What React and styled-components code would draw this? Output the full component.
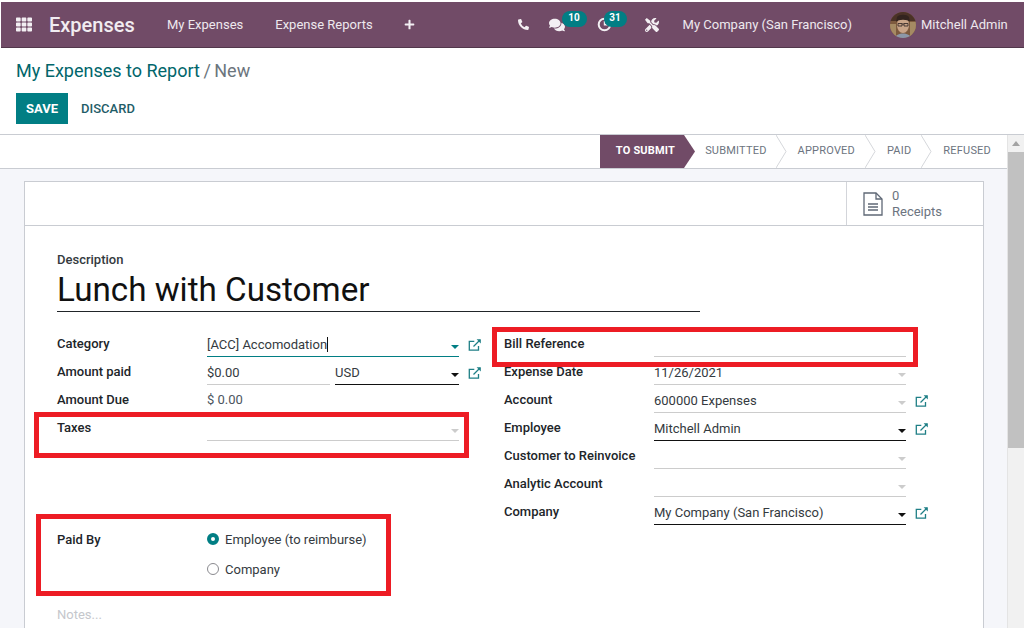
import React from "react";
import styled, { createGlobalStyle } from "styled-components";
import { FaPhoneAlt, FaComments, FaPlus, FaTools, FaTh } from "react-icons/fa";

const Global = createGlobalStyle`
  html, body { margin: 0; padding: 0; height: 100%; overflow: hidden; background: #fff; }
  body { font-family: Roboto, "Noto Sans", sans-serif; font-size: 13px; color: #212529; }
  #root { height: 628px; }
`;

const Page = styled.div`
  position: relative;
  width: 1024px;
  height: 628px;
  overflow: hidden;
  display: flex;
  flex-direction: column;
`;

const Navbar = styled.div`
  height: 45px;
  margin: 2px 0 0 1px;
  background: #714b67;
  border-bottom: 1px solid #52374b;
  display: flex;
  align-items: center;
  color: #eee8ee;
  flex-shrink: 0;
`;

const Apps = styled.div`
  width: 16px;
  margin-left: 15px;
  display: flex;
  color: #f3eff3;
  font-size: 17px;
`;

const Brand = styled.div`
  margin-left: 17px;
  font-size: 20px;
  font-weight: 500;
  color: #f1ecf1;
  width: 118px;
`;

const NavLink = styled.div`
  margin-right: ${(p) => p.$right ?? 32}px;
  margin-left: ${(p) => p.$left || 0}px;
  font-size: 13px;
`;

const NavIcon = styled.div`
  position: relative;
  display: flex;
  align-items: center;
  justify-content: center;
  font-size: ${(p) => p.$size || 13}px;
  margin-left: ${(p) => p.$left || 0}px;
  color: #f3eff3;
`;

const Badge = styled.span`
  position: absolute;
  top: -6px;
  left: ${(p) => p.$left}px;
  width: ${(p) => p.$width}px;
  height: 16px;
  border-radius: 8px;
  background: #017e84;
  color: #fff;
  font-size: 10px;
  font-weight: 700;
  line-height: 14px;
  text-align: center;
`;

const Avatar = styled.svg`
  width: 26px;
  height: 26px;
  margin-left: 38px;
  border-radius: 50%;
`;

const ControlPanel = styled.div`
  height: 87px;
  box-sizing: border-box;
  padding: 12px 16px 0;
  border-bottom: 1px solid #c9ccd2;
  flex-shrink: 0;
`;

const Crumbs = styled.div`
  font-size: 18px;
  line-height: 21px;
  color: #01666b;
  span {
    color: #6c757d;
    margin-left: -1px;
    word-spacing: -1px;
  }
`;

const Actions = styled.div`
  display: flex;
  align-items: center;
  margin-top: 12px;
`;

const Button = styled.div`
  height: 31px;
  line-height: 31px;
  padding: 0 ${(p) => (p.$primary ? 10 : 13)}px;
  background: ${(p) => (p.$primary ? "#017e84" : "transparent")};
  color: ${(p) => (p.$primary ? "#fff" : "#1f5d68")};
  font-size: 13px;
  font-weight: ${(p) => (p.$primary ? 700 : 500)};
`;

const Body = styled.div`
  flex: 1;
  display: flex;
  min-height: 0;
`;

const Main = styled.div`
  flex: 1;
  min-width: 0;
  display: flex;
  flex-direction: column;
`;

const StatusBar = styled.div`
  height: 34px;
  box-sizing: border-box;
  border-bottom: 1px solid #c9ccd2;
  display: flex;
  justify-content: flex-end;
  flex-shrink: 0;
`;

const Stage = styled.div`
  position: relative;
  height: 33px;
  box-sizing: border-box;
  padding: 0 ${(p) => p.$right}px 0 ${(p) => p.$left}px;
  line-height: 32px;
  font-size: 11px;
  letter-spacing: 0.2px;
  font-weight: ${(p) => (p.$current ? 700 : 400)};
  color: ${(p) => (p.$current ? "#fff" : "#6c7480")};
  background: ${(p) => (p.$current ? "#714b67" : "transparent")};
`;

const Arrow = styled.svg`
  position: absolute;
  top: 0;
  left: 100%;
  width: 11px;
  height: 33px;
`;

const Sheet = styled.div`
  flex: 1;
  background: #f5f6fa;
  padding: 12px 23px 0 24px;
  min-height: 0;
`;

const Card = styled.div`
  background: #fff;
  border: 1px solid #c9ccd2;
  border-bottom: 0;
  height: 100%;
  box-sizing: border-box;
`;

const ButtonBox = styled.div`
  height: 44px;
  box-sizing: border-box;
  border-bottom: 1px solid #c9ccd2;
  display: flex;
  justify-content: flex-end;
`;

const StatButton = styled.div`
  width: 137px;
  box-sizing: border-box;
  border-left: 1px solid #d3d5da;
  display: flex;
  align-items: center;
  padding-left: 16px;
  gap: 9px;
  color: #6c7480;
  font-size: 13px;
  line-height: 15.5px;
`;

const FormBody = styled.div`
  padding: 26px 32px 0;
`;

const SmallLabel = styled.div`
  font-weight: 500;
  font-size: 13px;
  line-height: 16px;
  color: #343a40;
`;

const Title = styled.div`
  width: 643px;
  height: 44px;
  box-sizing: border-box;
  margin-bottom: 17px;
  border-bottom: 1px solid #212529;
  font-size: 33.2px;
  line-height: 44px;
  color: #111;
`;

const Columns = styled.div`
  display: flex;
`;

const Column = styled.div`
  width: 447px;
  display: flex;
  flex-direction: column;
`;

const Row = styled.div`
  display: flex;
  height: ${(p) => p.$h || 28}px;
  align-items: flex-start;
`;

const Label = styled.div`
  width: 150px;
  flex-shrink: 0;
  font-weight: 500;
  font-size: 13px;
  line-height: 28px;
  margin-top: 1px;
  color: #212529;
`;

const Field = styled.div`
  position: relative;
  width: ${(p) => p.$width || 252}px;
  height: 28px;
  box-sizing: border-box;
  border-bottom: 1px solid ${(p) => p.$line || "#ccc"};
  line-height: 32px;
  font-size: 13px;
  color: #343a40;
  flex-shrink: 0;
  margin-right: ${(p) => p.$gap || 0}px;
`;

const PlainValue = styled.div`
  line-height: 30px;
  color: #4c5560;
  font-size: 13px;
`;

const Caret = styled.span`
  position: absolute;
  right: 0;
  top: 16px;
  border-left: 4px solid transparent;
  border-right: 4px solid transparent;
  border-top: 4px solid ${(p) => p.$color || "#ccc"};
`;

const Cursor = styled.span`
  display: inline-block;
  width: 1px;
  height: 15px;
  background: #111;
  vertical-align: -3px;
`;

const LinkIcon = styled.svg`
  width: 14px;
  height: 14px;
  margin: 9px 0 0 9px;
`;

const RadioGroup = styled.div`
  margin-top: -1px;
`;

const RadioRow = styled.div`
  display: flex;
  align-items: center;
  height: 30px;
  gap: 6px;
  color: #343a40;
  font-size: 13px;
`;

const Radio = styled.span`
  width: 12px;
  height: 12px;
  box-sizing: border-box;
  border-radius: 50%;
  background: ${(p) => (p.$on ? "#fff" : "transparent")};
  border: ${(p) => (p.$on ? "4px solid #017e84" : "1px solid #8a8a8f")};
`;

const Spacer = styled.div`
  height: ${(p) => p.$h}px;
`;

const Notes = styled.div`
  margin-top: 22px;
  color: #c5c7cc;
  font-size: 13px;
`;

const Highlight = styled.div`
  position: absolute;
  left: ${(p) => p.$x}px;
  top: ${(p) => p.$y}px;
  width: ${(p) => p.$w}px;
  height: ${(p) => p.$h}px;
  box-sizing: border-box;
  border: 5px solid #ed1c24;
  pointer-events: none;
`;

const Scrollbar = styled.div`
  width: 17px;
  flex-shrink: 0;
  background: #f1f1f1;
  border-left: 1px solid #e4e4e4;
  box-sizing: border-box;
  display: flex;
  flex-direction: column;
  align-items: center;
`;

const ScrollUp = styled.div`
  height: 17px;
  display: flex;
  align-items: center;
  span {
    border-left: 4px solid transparent;
    border-right: 4px solid transparent;
    border-bottom: 5px solid #a3a3a3;
  }
`;

const ScrollThumb = styled.div`
  width: 100%;
  height: 296px;
  background: #c1c1c1;
`;

const External = () => (
  <LinkIcon viewBox="0 0 14 14" fill="none" stroke="#1f7f86" strokeWidth="1.3">
    <path d="M10.5 8v4.2H1.3V3.4h5" />
    <path d="M5.5 8.5 12 2" />
    <path d="M8.6 1.2h4.2v4.2z" fill="#1f7f86" stroke="none" />
  </LinkIcon>
);

const stages = [
  { name: "SUBMITTED", left: 21, right: 9, chevron: true },
  { name: "APPROVED", left: 22, right: 10, chevron: true },
  { name: "PAID", left: 22, right: 10, chevron: true },
  { name: "REFUSED", left: 22, right: 16 },
];

const rightRows = [
  { label: "Bill Reference" },
  { label: "Expense Date", value: "11/26/2021", caret: true },
  { label: "Account", value: "600000 Expenses", caret: true, link: true },
  { label: "Employee", value: "Mitchell Admin", caret: true, link: true, strong: true },
  { label: "Customer to Reinvoice", caret: true },
  { label: "Analytic Account", caret: true },
  { label: "Company", value: "My Company (San Francisco)", caret: true, link: true, strong: true },
];

export default function App() {
  return (
    <Page>
      <Global />
      <Navbar>
        <Apps><FaTh /></Apps>
        <Brand>Expenses</Brand>
        <NavLink>My Expenses</NavLink>
        <NavLink $right={31}>Expense Reports</NavLink>
        <NavIcon $size={11}><FaPlus /></NavIcon>
        <NavIcon $size={11} $left={103}><FaPhoneAlt /></NavIcon>
        <NavIcon $size={16} $left={20}>
          <FaComments />
          <Badge $left={13} $width={25}>10</Badge>
        </NavIcon>
        <NavIcon $size={15} $left={32}>
          <svg width="15" height="15" viewBox="0 0 15 15" fill="none" stroke="#f3eff3" strokeWidth="2">
            <circle cx="7.5" cy="7.5" r="5.8" />
            <path d="M7.5 4v3.8h3" strokeWidth="1.4" />
          </svg>
          <Badge $left={7} $width={23}>31</Badge>
        </NavIcon>
        <NavIcon $size={14} $left={33}><FaTools /></NavIcon>
        <NavLink $left={24} $right={0}>My Company (San Francisco)</NavLink>
        <Avatar viewBox="0 0 26 26">
          <rect width="26" height="26" fill="#7d5a3e" />
          <path d="M0 0h26v9H0z" fill="#4a3226" />
          <path d="M0 12h6v14H0zM20 10h6v16h-6z" fill="#a58a63" />
          <ellipse cx="13" cy="13" rx="6" ry="8" fill="#c9a488" />
          <path d="M7 5c2-3 10-3 12 0l1 5c-2-3-12-3-14 0z" fill="#33241f" />
          <path d="M8 11.5h4v2.5H8zM14 11.5h4v2.5h-4zM12 12h2" fill="none" stroke="#3b2e2a" strokeWidth="0.9" />
          <path d="M5 26c1-6 15-6 16 0z" fill="#8c97a8" />
        </Avatar>
        <NavLink $left={5} $right={0}>Mitchell Admin</NavLink>
      </Navbar>

      <ControlPanel>
        <Crumbs>My Expenses to Report <span>/ New</span></Crumbs>
        <Actions>
          <Button $primary>SAVE</Button>
          <Button>DISCARD</Button>
        </Actions>
      </ControlPanel>

      <Body>
        <Main>
          <StatusBar>
            <Stage $current $left={16} $right={9}>
              TO SUBMIT
              <Arrow viewBox="0 0 11 33"><path d="M0 0 11 16.5 0 33z" fill="#714b67" /></Arrow>
            </Stage>
            {stages.map((s) => (
              <Stage key={s.name} $left={s.left} $right={s.right}>
                {s.name}
                {s.chevron && (
                  <Arrow viewBox="0 0 11 33">
                    <path d="M0 0 10 16.5 0 33" fill="none" stroke="#d5d7db" />
                  </Arrow>
                )}
              </Stage>
            ))}
          </StatusBar>
          <Sheet>
            <Card>
              <ButtonBox>
                <StatButton>
                  <svg width="20" height="24" viewBox="0 0 20 24" fill="none" stroke="#5f6876" strokeWidth="1.3">
                    <path d="M1 1h12l6 6v16H1z" />
                    <path d="M13 1v6h6" />
                    <path d="M5 12h10M5 15h10M5 18h10" />
                  </svg>
                  <div>0<br />Receipts</div>
                </StatButton>
              </ButtonBox>
              <FormBody>
                <SmallLabel>Description</SmallLabel>
                <Title>Lunch with Customer</Title>
                <Columns>
                  <Column>
                    <Row>
                      <Label>Category</Label>
                      <Field $line="#017e84">
                        [ACC] Accomodation<Cursor />
                        <Caret $color="#017e84" />
                      </Field>
                      <External />
                    </Row>
                    <Row>
                      <Label>Amount paid</Label>
                      <Field $width={123} $gap={5}>$0.00</Field>
                      <Field $width={124} $line="#111">
                        USD
                        <Caret $color="#111" />
                      </Field>
                      <External />
                    </Row>
                    <Row>
                      <Label>Amount Due</Label>
                      <PlainValue>$ 0.00</PlainValue>
                    </Row>
                    <Row>
                      <Label>Taxes</Label>
                      <Field><Caret /></Field>
                    </Row>
                    <Spacer $h={84} />
                    <Row $h={60}>
                      <Label>Paid By</Label>
                      <RadioGroup>
                        <RadioRow><Radio $on />Employee (to reimburse)</RadioRow>
                        <RadioRow><Radio />Company</RadioRow>
                      </RadioGroup>
                    </Row>
                    <Notes>Notes...</Notes>
                  </Column>
                  <Column>
                    {rightRows.map((r) => (
                      <Row key={r.label}>
                        <Label>{r.label}</Label>
                        <Field $line={r.strong ? "#111" : "#ccc"}>
                          {r.value}
                          {r.caret && <Caret $color={r.strong ? "#111" : "#ccc"} />}
                        </Field>
                        {r.link && <External />}
                      </Row>
                    ))}
                  </Column>
                </Columns>
              </FormBody>
            </Card>
          </Sheet>
        </Main>
        <Scrollbar>
          <ScrollUp><span /></ScrollUp>
          <ScrollThumb />
        </Scrollbar>
      </Body>

      <Highlight $x={492} $y={327} $w={426} $h={40} />
      <Highlight $x={34} $y={412} $w={435} $h={46} />
      <Highlight $x={36} $y={514} $w={355} $h={82} />
    </Page>
  );
}
